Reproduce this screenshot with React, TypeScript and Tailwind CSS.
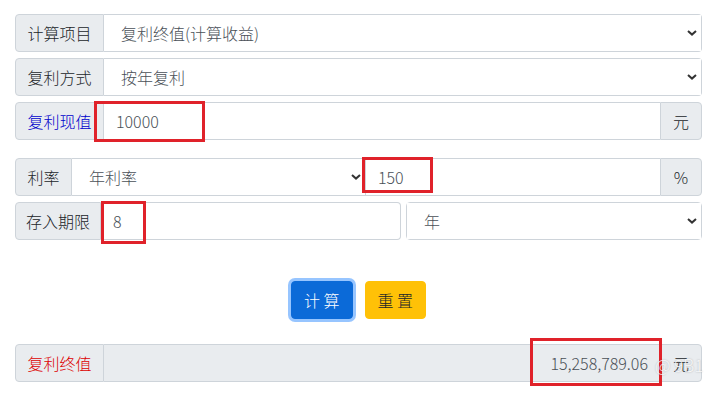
import type { ReactNode } from 'react';

const font = "font-['Noto_Sans_CJK_SC','Noto_Sans',sans-serif] font-light";

function Addon({ children, className = '' }: { children: ReactNode; className?: string }) {
  return (
    <span
      className={`flex h-full shrink-0 items-center justify-center border border-[#ced4da] bg-[#e9ecef] text-[16px] text-[#212529] ${className}`}
    >
      {children}
    </span>
  );
}

function Chevron() {
  return (
    <svg
      className="pointer-events-none absolute top-1/2 right-[4px] -translate-y-1/2"
      width="10"
      height="6"
      viewBox="0 0 10 6"
      fill="none"
    >
      <path d="M1 1l4 3.6L9 1" stroke="#333" strokeWidth="2" />
    </svg>
  );
}

function Select({ value, className = '' }: { value: string; className?: string }) {
  return (
    <div className={`relative h-full min-w-0 ${className}`}>
      <select
        defaultValue={value}
        className="h-full w-full appearance-none border-0 bg-white pr-6 pl-[17px] text-[16px] font-light text-[#495057] outline-none"
      >
        <option>{value}</option>
      </select>
      <Chevron />
    </div>
  );
}

function Box({ className }: { className: string }) {
  return <div className={`pointer-events-none absolute border-[3px] border-[#e0222a] ${className}`} />;
}

export default function App() {
  return (
    <div className={`min-h-[401px] w-[728px] bg-white ${font}`}>
      <div className="relative ml-[15px] w-[687px] pt-[14px]">
        <div className="flex flex-col gap-[6px]">
          {/* 计算项目 */}
          <div className="flex h-[38px]">
            <Addon className="w-[89px] rounded-l">计算项目</Addon>
            <div className="flex-1 rounded-r border border-l-0 border-[#ced4da]">
              <Select value="复利终值(计算收益)" className="rounded-r" />
            </div>
          </div>
          {/* 复利方式 */}
          <div className="flex h-[38px]">
            <Addon className="w-[89px] rounded-l">复利方式</Addon>
            <div className="flex-1 rounded-r border border-l-0 border-[#ced4da]">
              <Select value="按年复利" className="rounded-r" />
            </div>
          </div>
          {/* 复利现值 */}
          <div className="flex h-[38px]">
            <Addon className="w-[89px] rounded-l">
              <span className="text-[#0000cc]">复利现值</span>
            </Addon>
            <input
              defaultValue="10000"
              className="h-full min-w-0 flex-1 border-y border-[#ced4da] bg-white px-3 text-[16px] font-light text-[#495057] outline-none"
            />
            <Addon className="w-[42px] rounded-r">元</Addon>
          </div>
        </div>

        <div className="mt-[18px] flex flex-col gap-[6px]">
          {/* 利率 */}
          <div className="flex h-[38px]">
            <Addon className="w-[57px] rounded-l">利率</Addon>
            <div className="flex-1 border-y border-r border-[#ced4da]">
              <Select value="年利率" />
            </div>
            <input
              defaultValue="150"
              className="h-full w-[294px] min-w-0 border-y border-[#ced4da] bg-white px-3 text-[16px] font-light text-[#495057] outline-none"
            />
            <Addon className="w-[42px] rounded-r">%</Addon>
          </div>
          {/* 存入期限 */}
          <div className="flex h-[38px] gap-[5px]">
            <div className="flex w-[386px]">
              <Addon className="w-[86px] rounded-l">存入期限</Addon>
              <input
                defaultValue="8"
                className="h-full min-w-0 flex-1 rounded-r border border-l-0 border-[#ced4da] bg-white px-3 text-[16px] font-light text-[#495057] outline-none"
              />
            </div>
            <div className="flex-1 rounded border border-[#ced4da]">
              <Select value="年" className="rounded" />
            </div>
          </div>
        </div>

        {/* buttons */}
        <div className="mt-[41px] flex justify-center gap-3">
          <button className="h-[38px] rounded border border-[#0b6ad8] bg-[#0b6ad8] px-3 text-[16px] font-light text-white shadow-[0_0_0_3px_rgba(66,150,255,0.55)]">
            计 算
          </button>
          <button className="h-[38px] rounded border border-[#ffc107] bg-[#ffc107] px-3 text-[16px] text-[#212529]">
            重 置
          </button>
        </div>

        {/* 复利终值 */}
        <div className="mt-[25px] flex h-[38px]">
          <Addon className="w-[89px] rounded-l">
            <span className="text-[#dd0000]">复利终值</span>
          </Addon>
          <input
            readOnly
            value="15,258,789.06"
            className="h-full min-w-0 flex-1 border-y border-[#ced4da] bg-[#e9ecef] px-3 text-right text-[16px] font-light text-[#495057] outline-none"
          />
          <Addon className="w-[42px] rounded-r">元</Addon>
        </div>

        {/* annotation boxes */}
        <Box className="top-[101px] left-[79px] h-[41px] w-[111px]" />
        <Box className="top-[157px] left-[347px] h-[36px] w-[71px]" />
        <Box className="top-[201px] left-[86px] h-[43px] w-[45px]" />
        <Box className="top-[338px] left-[515px] h-[48px] w-[132px]" />

        {/* watermark */}
        <span className="pointer-events-none absolute top-[352px] left-[640px] text-[17px] whitespace-nowrap text-white/85 [text-shadow:0_0_2px_rgba(0,0,0,0.3)]">
          @ 9B1
        </span>
      </div>
    </div>
  );
}
